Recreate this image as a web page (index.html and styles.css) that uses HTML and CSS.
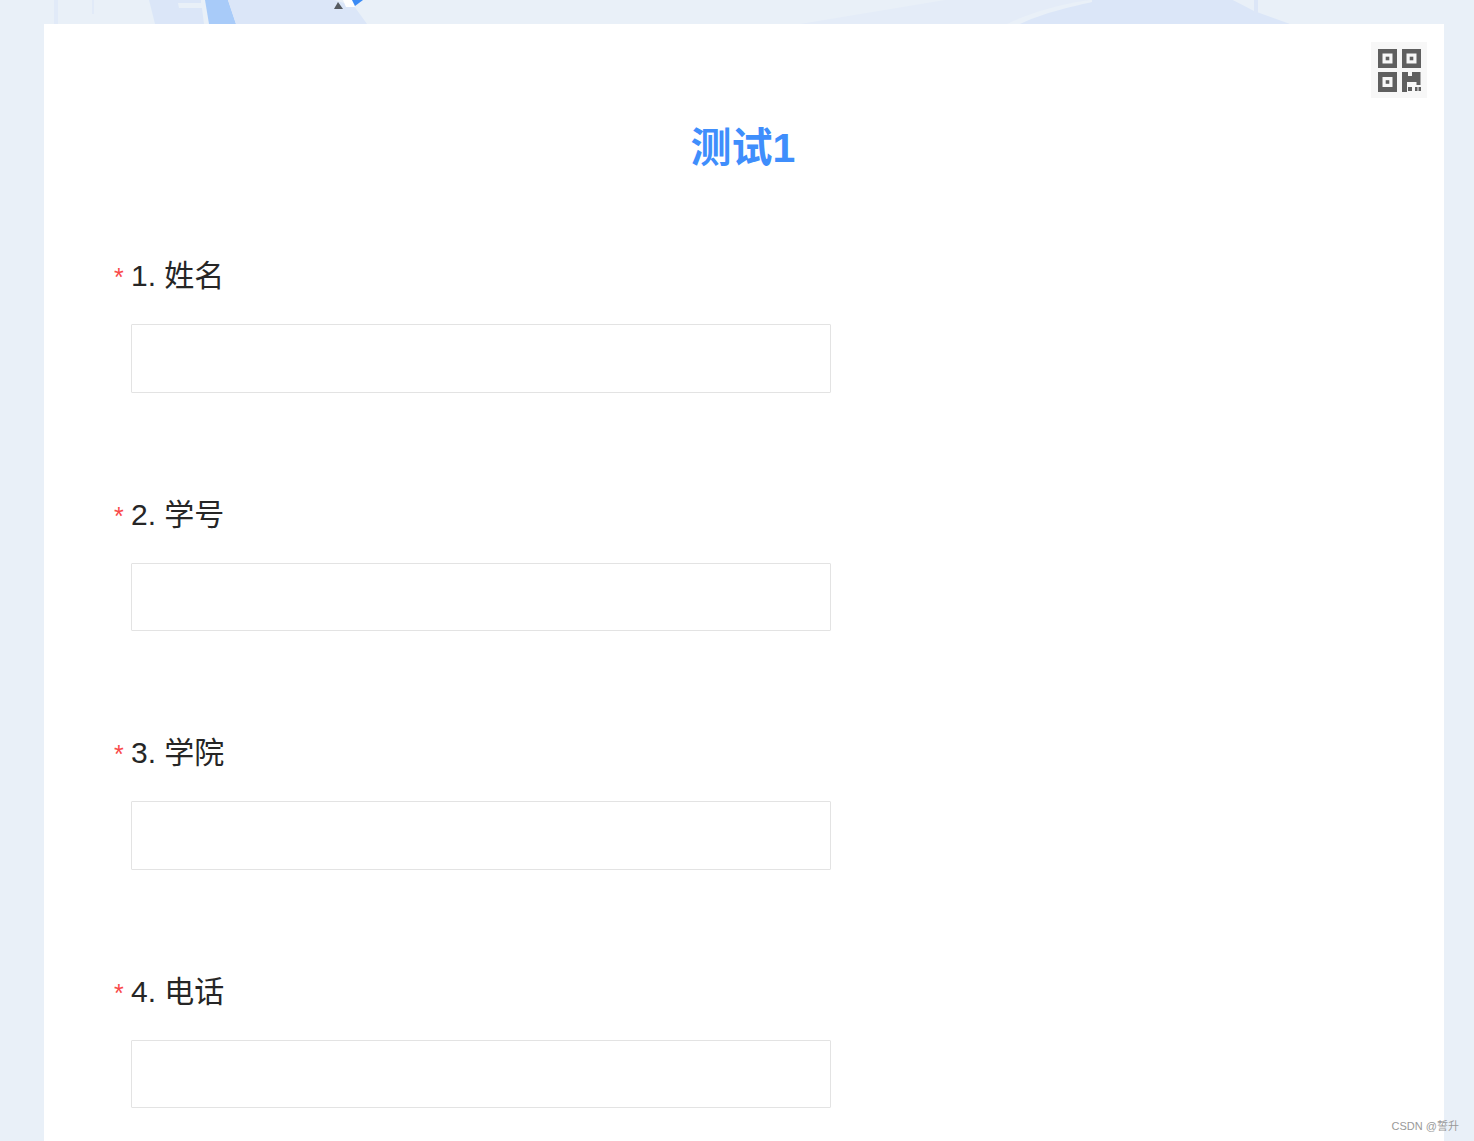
FILE: index.html
```html
<!DOCTYPE html>
<html lang="zh">
<head>
<meta charset="utf-8">
<title>测试1</title>
<link rel="stylesheet" href="styles.css">
</head>
<body>
<div class="hero">
  <svg class="hero-art" width="1474" height="24" viewBox="0 0 1474 24">
    <rect x="54" y="0" width="4" height="24" fill="#e1eaf8"/>
    <rect x="92" y="0" width="2" height="14" fill="#e1eaf8"/>
    <polygon points="149,0 155,24 204,24 202,8 179,8 178,3 201,3 201,0" fill="#dbe6f8"/>
    <polygon points="205,0 209,24 236,24 228,0" fill="#a8cbf9"/>
    <polygon points="228,0 236,24 367,24 354,6 334,0" fill="#dbe6f8"/>
    <polygon points="343,0 352,0 355,7 346,7" fill="#ffffff"/>
    <polygon points="352,0 363,0 355,6" fill="#3b8bf5"/>
    <polygon points="334,9 343,9 338,2" fill="#555a60"/>
    <polygon points="800,24 945,0 1474,0 1474,24" fill="#e4ecf8"/>
    <path d="M1007 24 C1040 8 1075 2 1090 0 L1233 0 L1290 13 L1290 24 Z" fill="#e9f0f8"/>
    <path d="M1020 24 C1050 10 1085 4 1092 2 L1092 0 L1233 0 C1262 14 1290 22 1290 24 Z" fill="#dbe6f8"/>
    <polygon points="1233,0 1254,11 1290,24 1474,24 1474,0" fill="#e9f0f8"/>
    <rect x="1254" y="0" width="4" height="13" fill="#dce6f7"/>
  </svg>
</div>
<main class="card">
  <div class="qr">
    <svg width="56" height="56" viewBox="0 0 56 56">
      <path fill="#5f5f5f" fill-rule="evenodd" d="M7 7h19v19H7zM11.500 11.500v10h10v-10zM31 7h19v19H31zM35.500 11.500v10h10v-10zM7 30h19v20H7zM11.500 35v10h10v-10z"/>
      <rect fill="#5f5f5f" x="14.700" y="14.700" width="3.600" height="3.600"/>
      <rect fill="#5f5f5f" x="38.700" y="14.700" width="3.600" height="3.600"/>
      <rect fill="#5f5f5f" x="14.700" y="38.200" width="3.600" height="3.600"/>
      <path fill="#5f5f5f" d="M31 30h6v4h4v-4h8.500v13h-4v-3H36v10h-5z"/>
      <rect fill="#5f5f5f" x="37" y="45" width="4" height="4"/>
      <rect fill="#5f5f5f" x="44" y="45" width="2.500" height="4"/>
      <rect fill="#5f5f5f" x="47.500" y="45" width="2.500" height="4"/>
    </svg>
  </div>
  <h1 class="title">测试1</h1>
  <form class="questions">
    <div class="question">
      <div class="label"><span class="req">*</span><span>1. 姓名</span></div>
      <input class="answer" type="text">
    </div>
    <div class="question">
      <div class="label"><span class="req">*</span><span>2. 学号</span></div>
      <input class="answer" type="text">
    </div>
    <div class="question">
      <div class="label"><span class="req">*</span><span>3. 学院</span></div>
      <input class="answer" type="text">
    </div>
    <div class="question">
      <div class="label"><span class="req">*</span><span>4. 电话</span></div>
      <input class="answer" type="text">
    </div>
  </form>
</main>
<div class="watermark">CSDN @誓升</div>
</body>
</html>
```
FILE: styles.css
```css
html, body {
  margin: 0;
  padding: 0;
  height: 1141px;
  overflow: hidden;
}
body {
  position: relative;
  background: #e9f0f8;
  font-family: "Liberation Sans", "Noto Sans CJK SC", sans-serif;
  color: #262626;
}
.hero {
  height: 24px;
  overflow: hidden;
}
.hero-art {
  display: block;
}
.card {
  position: relative;
  width: 1400px;
  height: 1117px;
  margin-left: 44px;
  background: #ffffff;
  overflow: hidden;
}
.qr {
  position: absolute;
  top: 18px;
  right: 17px;
  width: 56px;
  height: 56px;
  background: #f7f7f7;
}
.qr svg {
  display: block;
}
.title {
  margin: 0;
  padding: 94px 2px 0 0;
  font-size: 41px;
  line-height: 60px;
  font-weight: 700;
  text-align: center;
  color: #3f8efc;
}
.questions {
  display: flex;
  flex-direction: column;
  gap: 99px;
  padding: 75px 0 0 70px;
}
.question {
  display: flex;
  flex-direction: column;
  gap: 25px;
}
.label {
  display: flex;
  align-items: flex-start;
  font-size: 30px;
  line-height: 46px;
}
.req {
  width: 17px;
  flex: none;
  margin-top: 3px;
  color: #f94a4a;
  font-size: 25px;
  line-height: 42px;
}
.answer {
  display: block;
  box-sizing: border-box;
  width: 700px;
  height: 68.5px;
  margin: 0 0 0 17px;
  padding: 0 12px;
  border: 1px solid #e3e3e3;
  border-radius: 1px;
  background: #ffffff;
  outline: none;
}
.watermark {
  position: absolute;
  right: 15px;
  bottom: 7px;
  font-size: 11px;
  line-height: 15px;
  color: #999999;
}
```
